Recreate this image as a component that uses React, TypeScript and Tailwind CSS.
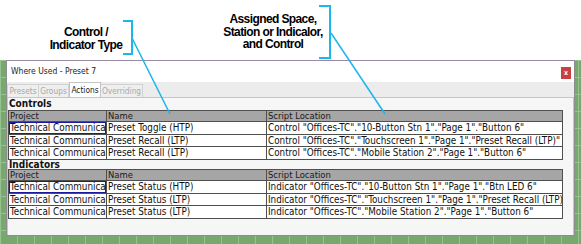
const controls = [
  { p: "Technical Communications", n: "Preset Toggle (HTP)", s: 'Control "Offices-TC"."10-Button Stn 1"."Page 1"."Button 6"', h: "h-[13px]" },
  { p: "Technical Communications", n: "Preset Recall (LTP)", s: 'Control "Offices-TC"."Touchscreen 1"."Page 1"."Preset Recall (LTP)"', h: "h-[12px]" },
  { p: "Technical Communications", n: "Preset Recall (LTP)", s: 'Control "Offices-TC"."Mobile Station 2"."Page 1"."Button 6"', h: "h-[13px]" },
];
const indicators = [
  { p: "Technical Communications", n: "Preset Status (HTP)", s: 'Indicator "Offices-TC"."10-Button Stn 1"."Page 1"."Btn LED 6"', h: "h-[13px]" },
  { p: "Technical Communications", n: "Preset Status (LTP)", s: 'Indicator "Offices-TC"."Touchscreen 1"."Page 1"."Preset Recall (LTP)"', h: "h-[12px]" },
  { p: "Technical Communications", n: "Preset Status (LTP)", s: 'Indicator "Offices-TC"."Mobile Station 2"."Page 1"."Button 6"', h: "h-[13px]" },
];

type Row = { p: string; n: string; s: string; h: string };

function Table({ rows }: { rows: Row[] }) {
  return (
    <div className="w-[555px] border border-[#4f4f4f] bg-white text-[9.8px] text-[#111]">
      <div className="flex h-[10px] bg-[#a6a6a6] text-[9.4px] leading-[10px] text-[#1a1a1a]">
        <div className="w-[97px] overflow-hidden whitespace-nowrap pl-[1px]">Project</div>
        <div className="w-[160px] overflow-hidden whitespace-nowrap border-l border-[#4f4f4f] pl-[1px]">Name</div>
        <div className="flex-1 overflow-hidden whitespace-nowrap border-l border-[#4f4f4f] pl-[1px]">Script Location</div>
      </div>
      {rows.map((r, i) => (
        <div key={i} className={`flex ${r.h} border-t border-[#4f4f4f] leading-[12px]`}>
          <div className={`w-[97px] overflow-hidden whitespace-nowrap pl-[1px] ${i === 0 ? "outline outline-1 -outline-offset-1 outline-[#1a1aa0]" : ""}`}>{r.p}</div>
          <div className="w-[160px] overflow-hidden whitespace-nowrap border-l border-[#4f4f4f] pl-[1px]">{r.n}</div>
          <div className="flex-1 overflow-hidden whitespace-nowrap border-l border-[#4f4f4f] pl-[1px]">{r.s}</div>
        </div>
      ))}
    </div>
  );
}

export default function App() {
  return (
    <div className="relative w-[581px] h-[244px] overflow-hidden bg-white font-['DejaVu_Sans_Condensed','Liberation_Sans',sans-serif]">
      <div className="h-[60px] bg-white" />
      <div className="h-[184px] bg-[#76a870] bg-[linear-gradient(to_right,#98c292_1px,transparent_1px),linear-gradient(to_bottom,#98c292_1px,transparent_1px)] bg-size-[17px_17px] pl-[6px]">
        <div className="flex h-[176px] w-[569px] flex-col border border-[#8d8d8d] border-t-[#9a8aa8] bg-white">
          <div className="flex h-[21px] items-center justify-between pl-[4px] pr-[3px]">
            <span className="text-[8.5px] text-[#222]">Where Used - Preset 7</span>
            <div className="mt-[3px] flex h-[12px] w-[10px] items-center justify-center bg-[#c8403f] text-[7px] font-bold leading-none text-white">x</div>
          </div>
          <div className="flex h-[15px] items-end bg-[#ececec] text-[8.3px] leading-none">
            <div className="flex h-[13px] w-[32px] items-center justify-center border border-b-0 border-[#d2d2d2] bg-[#efefef] text-[#a8a8a8]">Presets</div>
            <div className="flex h-[13px] w-[30px] items-center justify-center border border-b-0 border-l-0 border-[#d2d2d2] bg-[#efefef] text-[#a8a8a8]">Groups</div>
            <div className="flex h-[15px] w-[32px] items-center justify-center border border-b-0 border-[#c4c4c4] bg-white text-[#222]">Actions</div>
            <div className="flex h-[13px] w-[42px] items-center justify-center border border-b-0 border-l-0 border-[#d2d2d2] bg-[#efefef] text-[#a8a8a8]">Overriding</div>
          </div>
          <div className="flex-1 border border-b-0 border-[#c6c6c6] bg-[#f6f6f6]">
            <div className="h-[12px] pl-[1px] text-[10px] font-bold leading-[12px] text-[#111]">Controls</div>
            <Table rows={controls} />
            <div className="h-[9px] pl-[1px] text-[10px] font-bold leading-[9px] text-[#111]">Indicators</div>
            <Table rows={indicators} />
          </div>
        </div>
      </div>

      <div className="absolute left-[36px] top-[26px] w-[100px] text-center font-['Liberation_Sans',sans-serif] text-[12px] font-bold leading-[13px] tracking-[-0.6px] text-black">
        Control /<br />Indicator Type
      </div>
      <div className="absolute left-[213px] top-[13px] w-[120px] text-center font-['Liberation_Sans',sans-serif] text-[12px] font-bold leading-[12.5px] tracking-[-0.6px] text-black">
        Assigned Space,<br />Station or Indicalor,<br />and Control
      </div>
      <svg className="pointer-events-none absolute left-0 top-0" width="581" height="244" viewBox="0 0 581 244">
        <polyline points="123,21 132,21 132,54 123,54" fill="none" stroke="#1db6ea" strokeWidth="2" />
        <line x1="132" y1="38" x2="170" y2="114" stroke="#1db6ea" strokeWidth="1.5" />
        <polyline points="319,6 330,6 330,58 319,58" fill="none" stroke="#1db6ea" strokeWidth="2" />
        <line x1="331" y1="33" x2="385" y2="114" stroke="#1db6ea" strokeWidth="1.5" />
      </svg>
    </div>
  );
}
